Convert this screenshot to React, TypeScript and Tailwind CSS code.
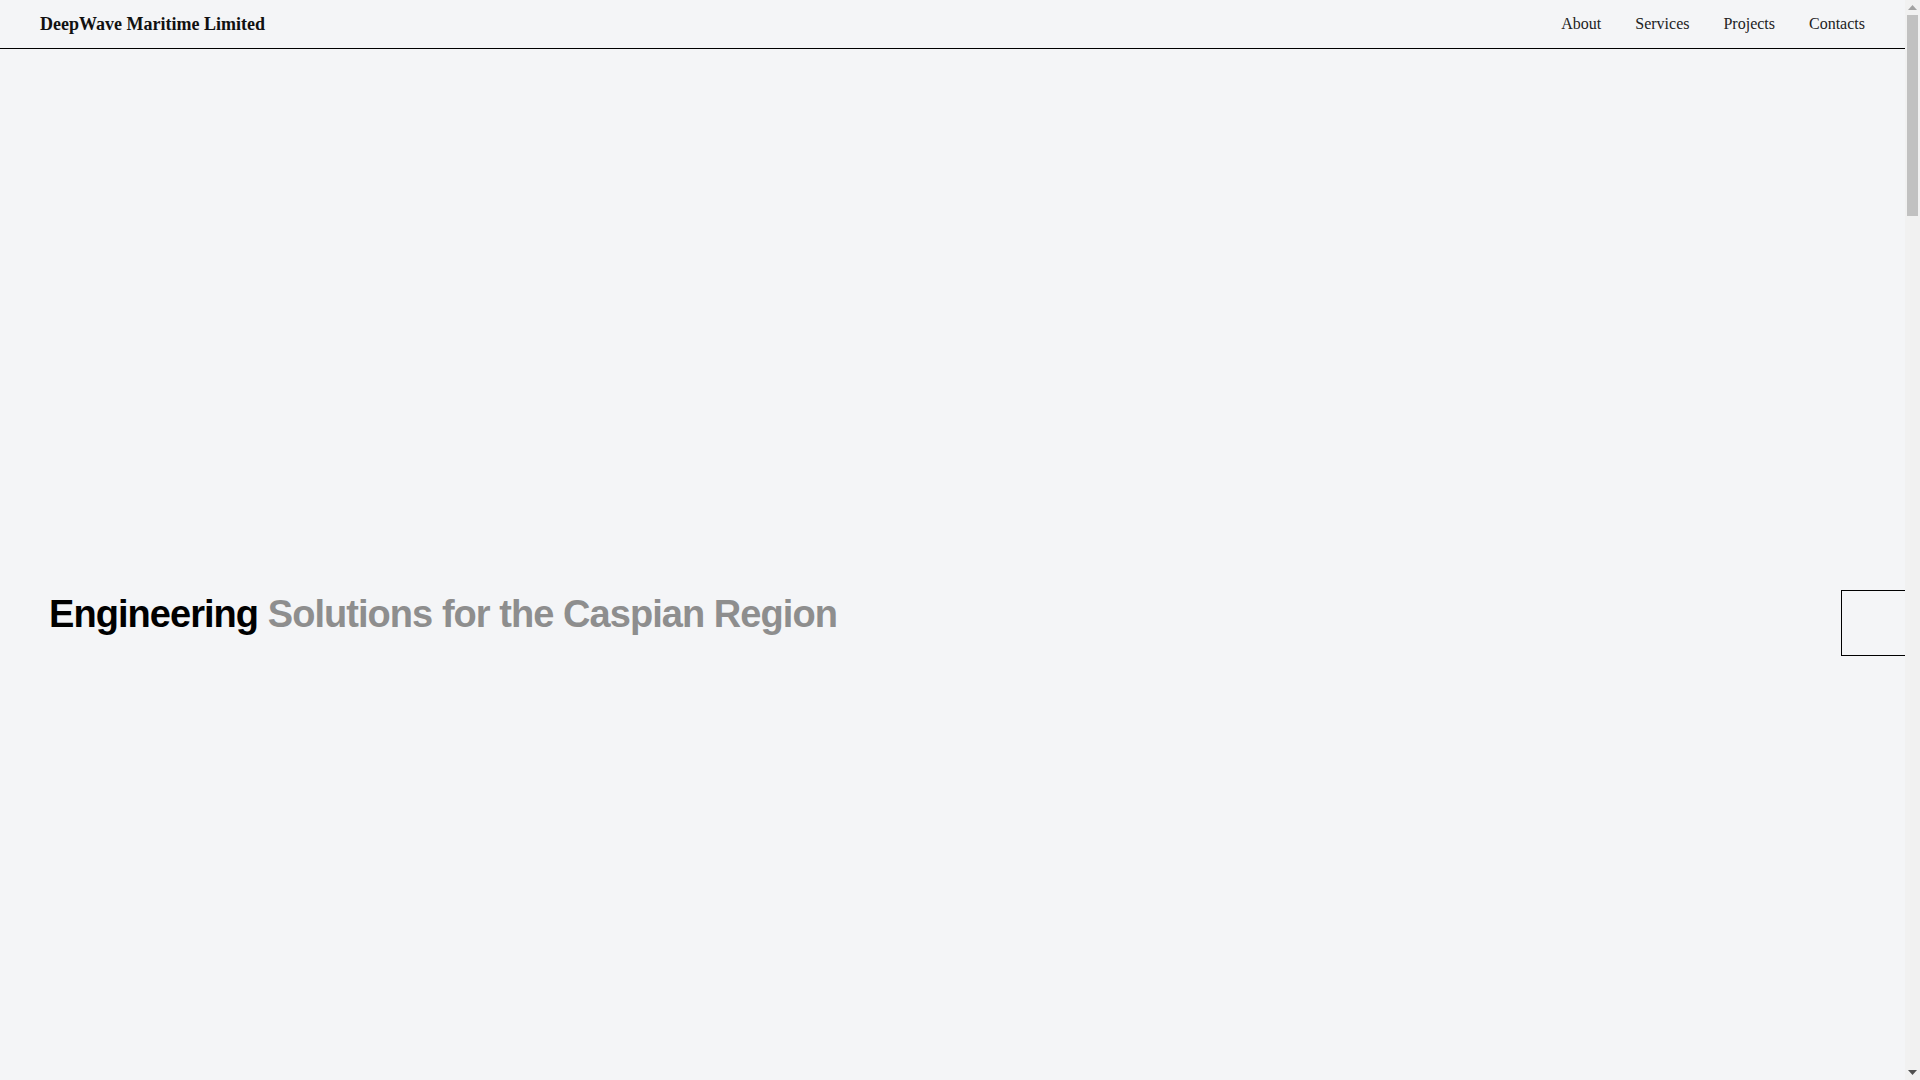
import React from 'react';

const navLinks = ['About', 'Services', 'Projects', 'Contacts'];

const Header: React.FC = () => {
  return (
    <header className="h-[49px] border-b border-black flex items-center justify-between px-10 bg-[#f4f5f7]">
      <a href="#" className="text-[18px] font-bold text-[#111] font-['Liberation_Serif',serif]">
        DeepWave Maritime Limited
      </a>
      <nav className="flex items-center gap-[34px]">
        {navLinks.map((link) => (
          <a key={link} href="#" className="text-base text-[#222] font-['Liberation_Serif',serif]">
            {link}
          </a>
        ))}
      </nav>
    </header>
  );
};

const Hero: React.FC = () => {
  return (
    <section className="pt-[541px] flex items-start justify-between pl-[49px]">
      <h1 className="mt-[5px] text-[38px] leading-none font-bold tracking-tight font-['Liberation_Sans',Arial,sans-serif]">
        <span className="text-black">Engineering</span>{' '}
        <span className="text-[#8e8e8e]">Solutions for the Caspian Region</span>
      </h1>
      <button className="w-[66px] h-[66px] shrink-0 border border-black -mr-[2px]" aria-label="Next" />
    </section>
  );
};

// page scrollbar, as the browser draws it
const ScrollTrack: React.FC = () => {
  return (
    <div className="w-[15px] h-screen shrink-0 bg-[#f1f1f1] flex flex-col items-center">
      <div className="h-[15px] flex items-center justify-center">
        <svg width="9" height="5" viewBox="0 0 9 5">
          <polygon points="4.5,0 9,5 0,5" fill="#a3a3a3" />
        </svg>
      </div>
      <div className="w-[11px] h-[201px] bg-[#c1c1c1]" />
      <div className="flex-1" />
      <div className="h-[15px] flex items-center justify-center">
        <svg width="9" height="5" viewBox="0 0 9 5">
          <polygon points="0,0 9,0 4.5,5" fill="#505050" />
        </svg>
      </div>
    </div>
  );
};

export default function App() {
  return (
    <div className="h-screen flex bg-[#f4f5f7] overflow-hidden">
      <div className="flex-1 h-screen overflow-y-auto overflow-x-hidden">
        <div className="min-h-[5640px]">
          <Header />
          <Hero />
        </div>
      </div>
      <ScrollTrack />
    </div>
  );
}
